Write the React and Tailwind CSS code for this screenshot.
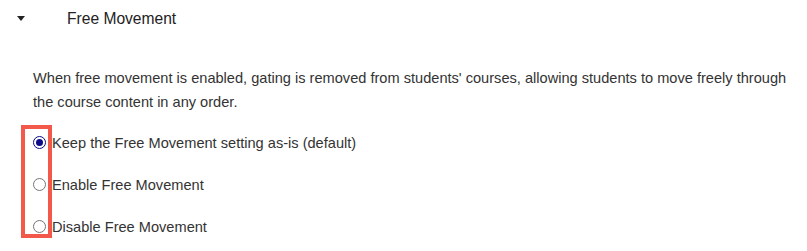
import React, { useState } from "react";

const options = [
  { id: "keep", label: "Keep the Free Movement setting as-is (default)" },
  { id: "enable", label: "Enable Free Movement" },
  { id: "disable", label: "Disable Free Movement" },
];

function Radio({ checked }) {
  return (
    <span
      className={
        "flex h-[13px] w-[13px] shrink-0 items-center justify-center rounded-full border bg-white " +
        (checked ? "border-[#0a0a8a] border-[1.5px]" : "border-[#767676]")
      }
    >
      {checked && <span className="h-[7px] w-[7px] rounded-full bg-[#0a0a8a]" />}
    </span>
  );
}

export default function App() {
  const [value, setValue] = useState("keep");

  return (
    <div className="h-[251px] w-[807px] overflow-hidden bg-white text-[#333] font-['Liberation_Sans',Arial,sans-serif]">
      {/* Section header */}
      <div className="flex h-[38px] items-center">
        <span className="ml-[17px] mb-[2px] h-0 w-0 border-x-[4px] border-t-[5px] border-x-transparent border-t-[#222]" />
        <span className="ml-[42px] text-[15.6px] text-[#222]">Free Movement</span>
      </div>

      {/* Description */}
      <p className="mt-[28px] pl-[33px] pr-[14px] text-[14.6px] leading-[24px]">
        When free movement is enabled, gating is removed from students' courses, allowing students to move freely through
        the course content in any order.
      </p>

      {/* Options */}
      <div className="relative mt-[9px] flex flex-col">
        {options.map((o) => (
          <label
            key={o.id}
            className="flex h-[42px] cursor-pointer items-center text-[14.6px]"
            onClick={() => setValue(o.id)}
          >
            <span className="ml-[33px] mr-[6px] mb-[4px]">
              <Radio checked={value === o.id} />
            </span>
            <span>{o.label}</span>
          </label>
        ))}
        {/* highlight box */}
        <div className="pointer-events-none absolute left-[21px] top-[2px] h-[113px] w-[31px] border-[4.5px] border-[#f2594b]" />
      </div>
    </div>
  );
}
